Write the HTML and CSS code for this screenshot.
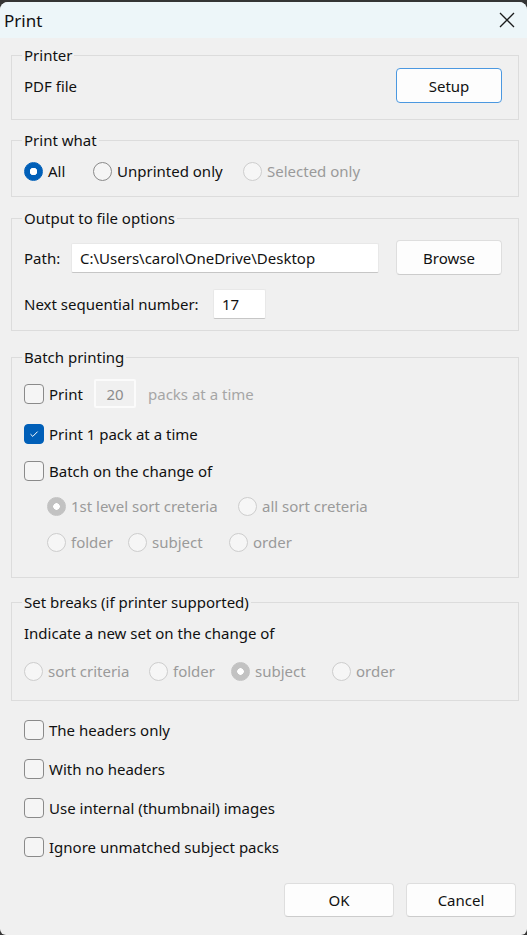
FILE: index.html
```html
<!DOCTYPE html>
<html lang="en">
<head>
  <meta charset="UTF-8">
  <meta name="viewport" content="width=device-width, initial-scale=1.0">
  <title>Print</title>
  <link rel="stylesheet" href="styles.css">
</head>
<body>
  <div class="window">
    <div class="titlebar">
      <span class="title">Print</span>
      <span class="close">
        <svg width="16" height="16" viewBox="0 0 16 16"><path d="M1 1L15 15M15 1L1 15" stroke="#1b1b1b" stroke-width="1.3" fill="none"/></svg>
      </span>
    </div>

    <div class="content">
      <fieldset class="group group-printer">
        <legend>Printer</legend>
        <div class="row row-tall">
          <span>PDF file</span>
          <button class="btn btn-default push-right">Setup</button>
        </div>
      </fieldset>

      <fieldset class="group group-what">
        <legend>Print what</legend>
        <div class="row">
          <label class="opt w-69"><span class="radio checked"></span>All</label>
          <label class="opt w-150"><span class="radio"></span>Unprinted only</label>
          <label class="opt disabled"><span class="radio"></span>Selected only</label>
        </div>
      </fieldset>

      <fieldset class="group group-output">
        <legend>Output to file options</legend>
        <div class="row row-tall">
          <span class="w-47">Path:</span>
          <span class="textbox path-box">C:\Users\carol\OneDrive\Desktop</span>
          <button class="btn push-right">Browse</button>
        </div>
        <div class="row row-input gap-14">
          <span class="w-189">Next sequential number:</span>
          <span class="textbox seq-box">17</span>
        </div>
      </fieldset>

      <fieldset class="group group-batch">
        <legend>Batch printing</legend>
        <div class="row row-num">
          <label class="opt w-70"><span class="check"></span>Print</label>
          <span class="textbox num-box">20</span>
          <span class="muted">packs at a time</span>
        </div>
        <div class="row gap-15">
          <label class="opt"><span class="check checked">
            <svg width="10" height="8" viewBox="0 0 10 8"><path d="M1.5 4.2L3.8 6.4L8.6 1.6" stroke="#fff" stroke-width="1" fill="none"/></svg>
          </span>Print 1 pack at a time</label>
        </div>
        <div class="row gap-15">
          <label class="opt"><span class="check"></span>Batch on the change of</label>
        </div>
        <div class="row indent gap-13">
          <label class="opt disabled w-191"><span class="radio checked"></span>1st level sort creteria</label>
          <label class="opt disabled"><span class="radio"></span>all sort creteria</label>
        </div>
        <div class="row indent gap-14">
          <label class="opt disabled w-81"><span class="radio"></span>folder</label>
          <label class="opt disabled w-101"><span class="radio"></span>subject</label>
          <label class="opt disabled"><span class="radio"></span>order</label>
        </div>
      </fieldset>

      <fieldset class="group group-breaks">
        <legend>Set breaks (if printer supported)</legend>
        <div class="row">
          <span>Indicate a new set on the change of</span>
        </div>
        <div class="row gap-16">
          <label class="opt disabled w-125"><span class="radio"></span>sort criteria</label>
          <label class="opt disabled w-82"><span class="radio"></span>folder</label>
          <label class="opt disabled w-101"><span class="radio checked"></span>subject</label>
          <label class="opt disabled"><span class="radio"></span>order</label>
        </div>
      </fieldset>

      <div class="options">
        <label class="opt row"><span class="check"></span>The headers only</label>
        <label class="opt row"><span class="check"></span>With no headers</label>
        <label class="opt row"><span class="check"></span>Use internal (thumbnail) images</label>
        <label class="opt row"><span class="check"></span>Ignore unmatched subject packs</label>
      </div>

      <div class="actions">
        <button class="btn btn-wide">OK</button>
        <button class="btn btn-wide">Cancel</button>
      </div>
    </div>
  </div>
</body>
</html>
```

FILE: styles.css
```css
body {
  margin: 0;
  font-family: "Noto Sans", "Open Sans", sans-serif;
  font-size: 15px;
  color: #111;
  background-color: #353535;
}

.window {
  margin-top: 2px;
  height: 933px;
  background-color: #f0f0f0;
  border-radius: 8px 8px 6px 6px;
  overflow: hidden;
}

.titlebar {
  height: 36px;
  display: flex;
  align-items: center;
  justify-content: space-between;
  padding: 0 12px 0 4px;
  background-color: #edf6f9;
}

.title {
  font-size: 17px;
}

.close {
  display: flex;
}

.content {
  padding: 6px 8px 0 11px;
}

.group {
  margin: 0;
  padding: 0 16px 0 12px;
  min-width: 0;
  border: 1px solid #dcdcdc;
}

.group legend {
  padding: 0 2px;
  margin-left: -2px;
  line-height: 22px;
}

.group-printer { padding-top: 2px; padding-bottom: 16px; }
.group-what { margin-top: 9px; padding-top: 9px; padding-bottom: 14px; }
.group-output { margin-top: 10px; padding-top: 11px; padding-bottom: 11px; }
.group-batch { margin-top: 15px; padding-top: 11px; padding-bottom: 24px; }
.group-breaks { margin-top: 13px; padding-top: 9px; padding-bottom: 18px; }

.row {
  display: flex;
  align-items: center;
  height: 22px;
}

.row-tall { height: 35px; }
.row-input { height: 30px; }
.row-num { height: 29px; }

.gap-13 { margin-top: 13px; }
.gap-14 { margin-top: 14px; }
.gap-15 { margin-top: 15px; }
.gap-16 { margin-top: 16px; }

.indent { padding-left: 23px; }

.push-right { margin-left: auto; }

.w-47 { width: 47px; }
.w-69 { width: 69px; }
.w-70 { width: 70px; }
.w-81 { width: 81px; }
.w-82 { width: 82px; }
.w-101 { width: 101px; }
.w-125 { width: 125px; }
.w-150 { width: 150px; }
.w-189 { width: 189px; }
.w-191 { width: 191px; }

.opt {
  display: flex;
  align-items: center;
  flex-shrink: 0;
}

.opt.disabled {
  color: #9a9a9a;
}

.muted {
  color: #a6a6a6;
}

.radio {
  width: 17px;
  height: 17px;
  margin-right: 5px;
  border: 1px solid #8a8a8a;
  border-radius: 50%;
  background-color: #f5f5f5;
  flex-shrink: 0;
}

.radio.checked {
  border-color: #005fb8;
  background: radial-gradient(circle, #fff 0 3.5px, #005fb8 4px);
}

.disabled .radio {
  border-color: #cdcdcd;
  background-color: #f6f6f6;
}

.disabled .radio.checked {
  border-color: #c2c2c2;
  background: radial-gradient(circle, #fff 0 3px, #c2c2c2 3.5px);
}

.check {
  width: 18px;
  height: 18px;
  margin-right: 5px;
  border: 1px solid #8a8a8a;
  border-radius: 4px;
  background-color: #f5f5f5;
  display: flex;
  align-items: center;
  justify-content: center;
  flex-shrink: 0;
}

.check.checked {
  border-color: #005fb8;
  background-color: #005fb8;
}

.textbox {
  box-sizing: border-box;
  display: flex;
  align-items: center;
  height: 30px;
  padding-left: 8px;
  background-color: #fff;
  border: 1px solid #e8e8e8;
  border-bottom-color: #c6c6c6;
  border-radius: 2px;
}

.path-box { width: 308px; }
.seq-box { width: 53px; }

.num-box {
  width: 42px;
  height: 29px;
  padding: 0;
  justify-content: center;
  margin-right: 12px;
  color: #8c8c8c;
  background-color: #f0f0f0;
  border: 2px solid #fbfbfb;
}

.btn {
  box-sizing: border-box;
  width: 106px;
  height: 35px;
  padding: 0;
  font-family: inherit;
  font-size: 15px;
  color: #111;
  background-color: #fdfdfd;
  border: 1px solid #dedede;
  border-bottom-color: #cccccc;
  border-radius: 4px;
}

.btn-default {
  border-color: #4b98e0;
}

.options {
  margin-top: 18px;
  padding-left: 13px;
  display: flex;
  flex-direction: column;
  gap: 17px;
}

.actions {
  margin-top: 25px;
  margin-right: 3px;
  display: flex;
  justify-content: flex-end;
  gap: 12px;
}

.btn-wide {
  width: 110px;
  height: 34px;
}
```
